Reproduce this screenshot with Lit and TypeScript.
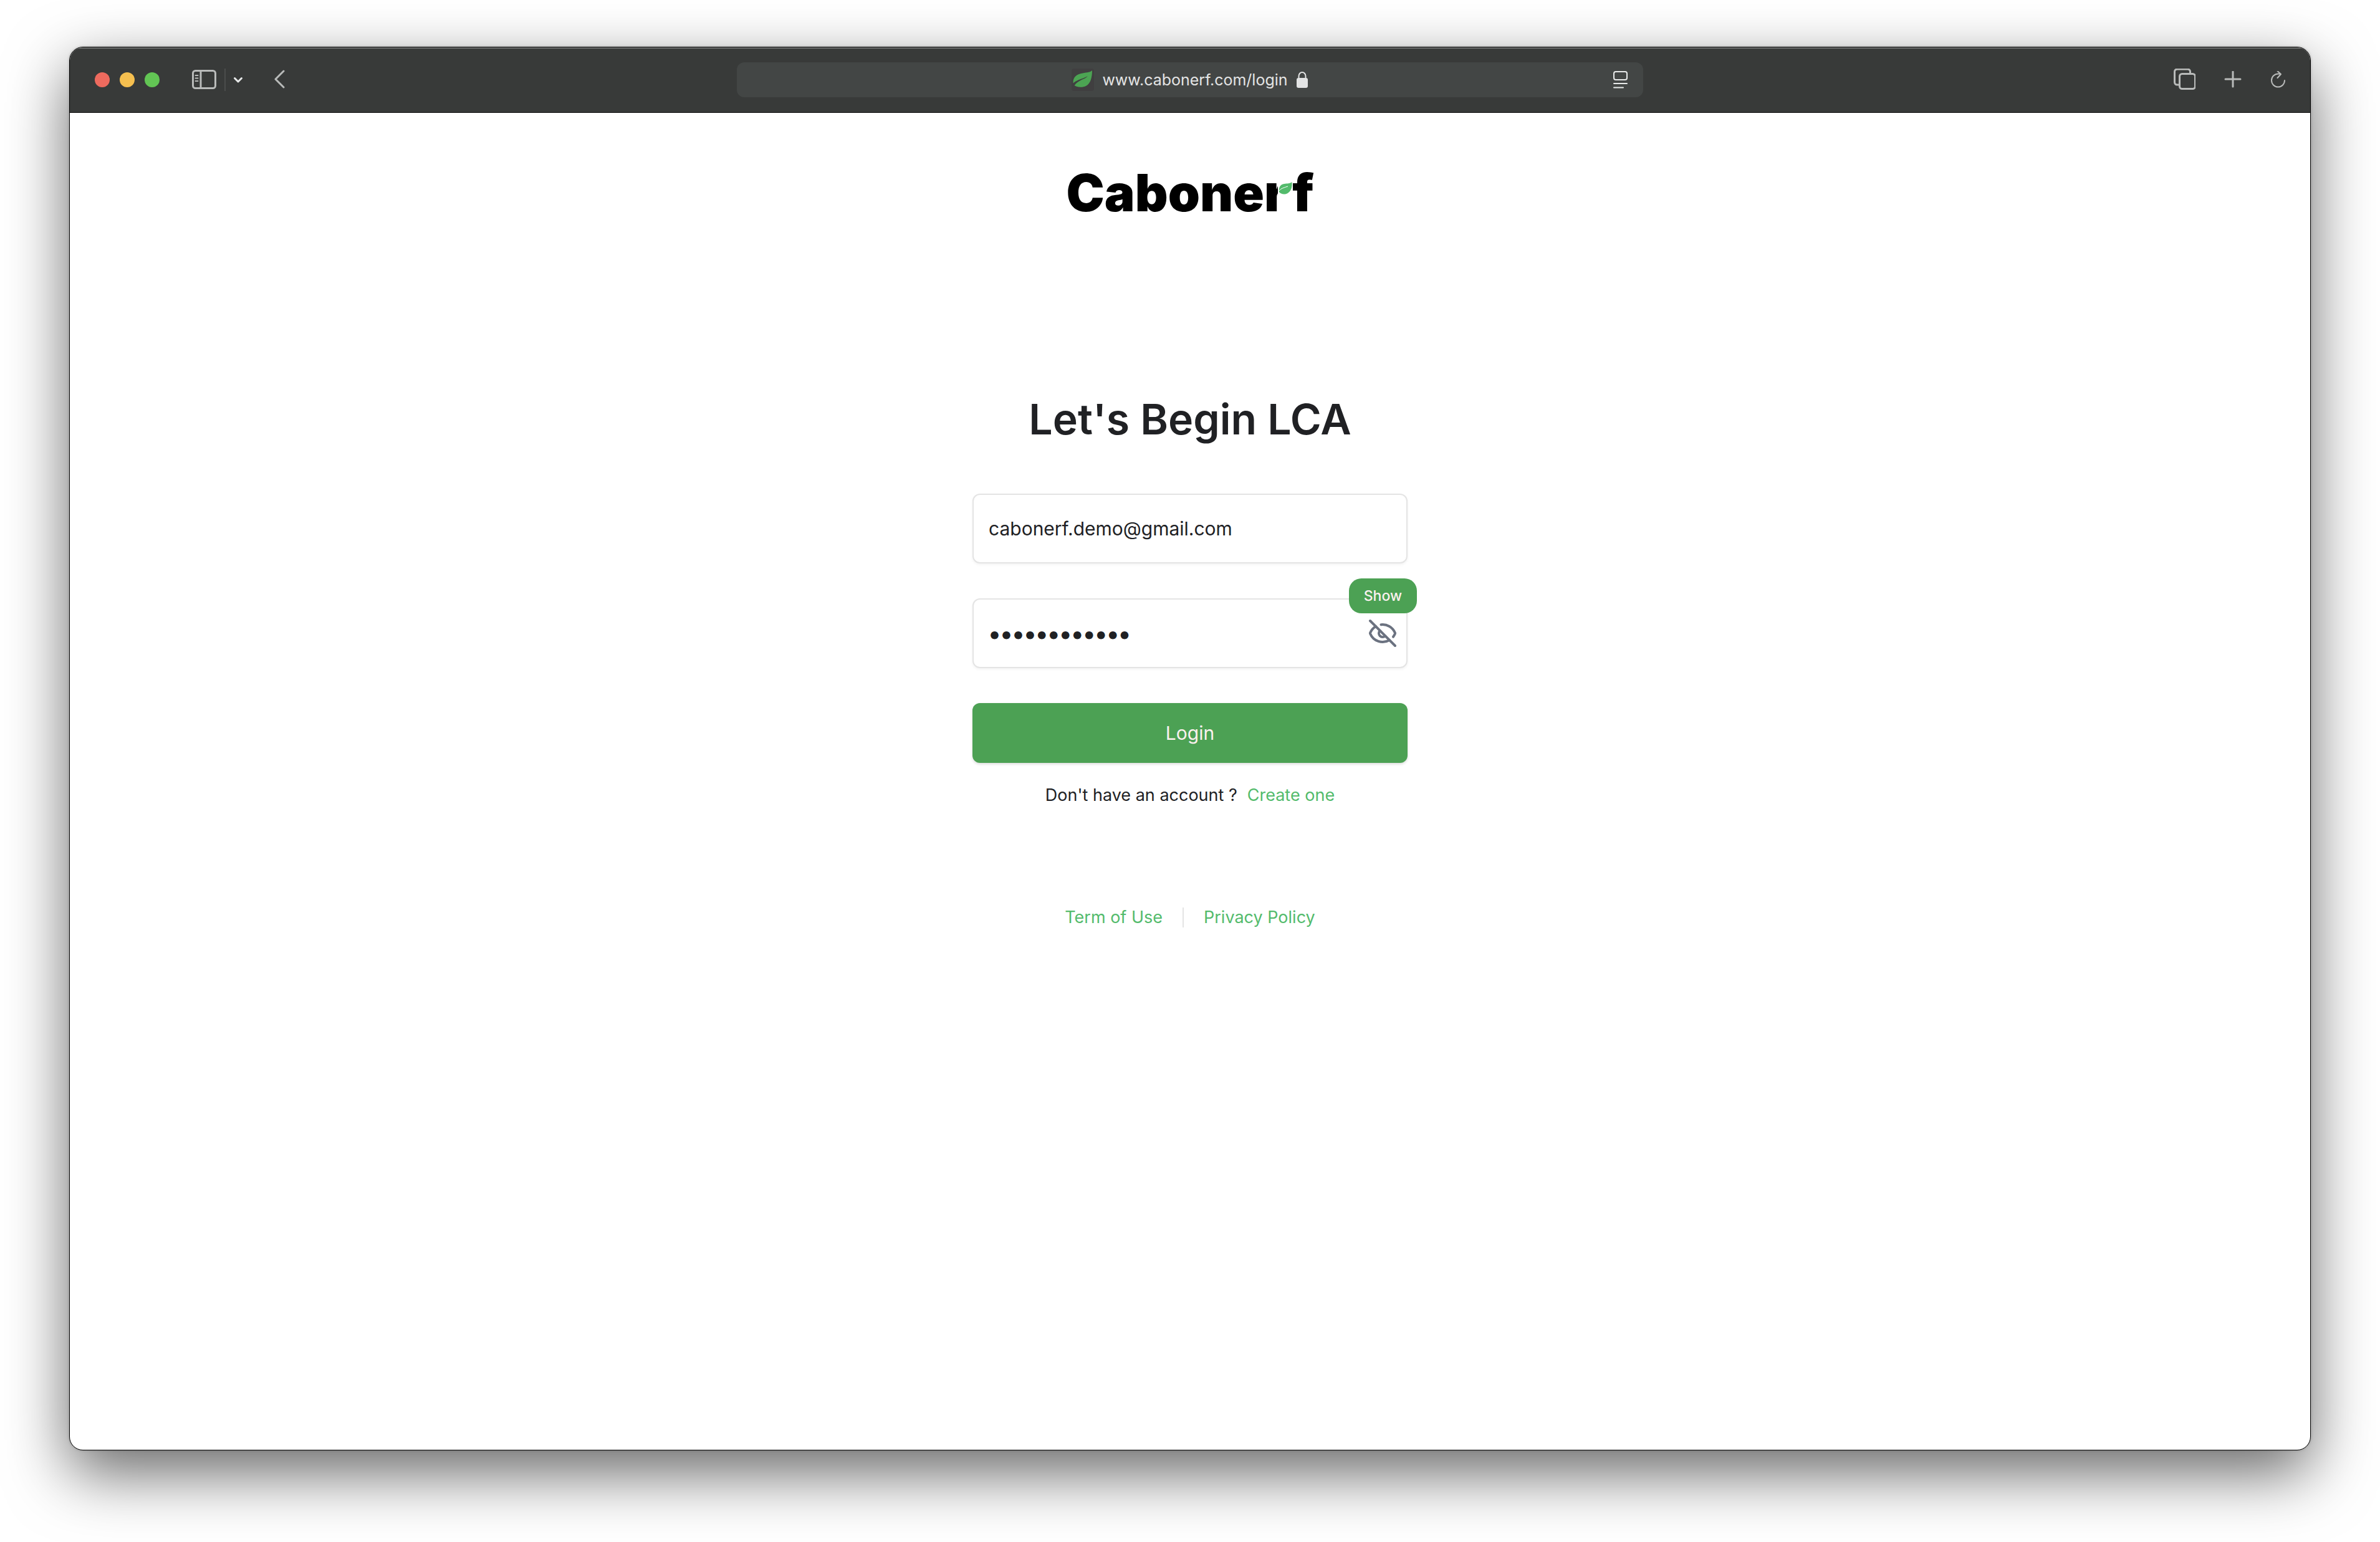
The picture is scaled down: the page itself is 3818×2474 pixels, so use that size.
import { LitElement, html, css } from "lit";
import { customElement } from "lit/decorators.js";

@customElement("browser-toolbar")
class BrowserToolbar extends LitElement {
  static styles = css`
    :host {
      display: grid;
      grid-template-columns: minmax(0, 1fr) minmax(0, 1454px) minmax(0, 1fr);
      align-items: center;
      box-sizing: border-box;
      height: 105px;
      padding: 0 36px;
      background: #383a39;
      box-shadow: inset 0 2px 0 #6f7170;
      border-bottom: 1px solid #000;
      font-family: Inter, sans-serif;
    }
    .side {
      display: flex;
      align-items: center;
    }
    .side.end {
      justify-content: flex-end;
      gap: 46px;
    }
    .lights {
      display: flex;
      gap: 16px;
      margin: 0 52px 0 4px;
    }
    .light {
      width: 24px;
      height: 24px;
      padding: 0;
      border: 0;
      border-radius: 50%;
    }
    .close { background: #ed6a5e; }
    .minimize { background: #f5bf4f; }
    .maximize { background: #62c554; }
    .tool {
      display: flex;
      padding: 0;
      border: 0;
      background: none;
      color: #b9bbba;
    }
    .bright { color: #e8eaea; }
    .rule {
      width: 2px;
      height: 36px;
      margin: 0 12px;
      background: #4b4d4c;
    }
    .back { margin-left: 48px; }
    .address {
      display: grid;
      grid-template-columns: 48px 1fr 48px;
      align-items: center;
      height: 56px;
      border-radius: 12px;
      background: #434645;
    }
    .location {
      grid-column: 2;
      display: flex;
      align-items: center;
      justify-content: center;
      gap: 13px;
      color: #e3e4e4;
      font-size: 25px;
      line-height: 32px;
    }
    .favicon {
      display: flex;
      border-radius: 4px;
      background: #403f40;
    }
    svg { display: block; fill: none; stroke: currentColor; }
  `;

  render() {
    return html`
      <div class="side">
        <div class="lights">
          <button class="light close" aria-label="Close"></button>
          <button class="light minimize" aria-label="Minimize"></button>
          <button class="light maximize" aria-label="Full screen"></button>
        </div>
        <button class="tool" aria-label="Sidebar">
          <svg width="40" height="32" viewBox="0 0 40 32" stroke-width="3">
            <rect x="1.500" y="1.500" width="36" height="28" rx="4" />
            <path d="M14 1.500v28" />
            <path d="M5.500 9h4M5.500 13.500h4M5.500 18h4" stroke-width="2" stroke-linecap="round" />
          </svg>
        </button>
        <span class="rule"></span>
        <button class="tool bright" aria-label="Tab groups">
          <svg width="16" height="12" viewBox="0 0 16 12" stroke-width="3" stroke-linecap="round" stroke-linejoin="round">
            <path d="M2.500 3.500 8 9l5.500-5.500" />
          </svg>
        </button>
        <button class="tool back" aria-label="Back">
          <svg width="20" height="32" viewBox="0 0 20 32" stroke-width="3" stroke-linecap="round" stroke-linejoin="round">
            <path d="M17 2 4 15l13 13" />
          </svg>
        </button>
      </div>
      <div class="address">
        <div class="location">
          <span class="favicon">
            <svg width="36" height="36" viewBox="0 0 36 36" stroke="none">
              <path fill="#4ca453" stroke="none" d="M33 3C29 7 22 6 15 8 6 10 1 16 3 26c4 4 14 5 20 2C31 24 33 13 33 3Z" />
              <path fill="#403f40" stroke="none" d="M1 25C7 18 17 17 26 12 21 18 10 18 4 28Z" />
            </svg>
          </span>
          <span>www.cabonerf.com/login</span>
          <svg width="20" height="28" viewBox="0 0 20 28" stroke-width="2">
            <rect x="1" y="11" width="18" height="16" rx="3" fill="currentColor" stroke="none" />
            <path d="M4.500 12V8a5.500 6 0 0 1 11 0v4" />
          </svg>
        </div>
        <button class="tool bright" aria-label="Reader">
          <svg width="24" height="28" viewBox="0 0 24 28" stroke-width="2" stroke-linecap="round">
            <rect x="1" y="1" width="21" height="13" rx="3" />
            <path d="M1 20h21M1 26.500h15" />
          </svg>
        </button>
      </div>
      <div class="side end">
        <button class="tool" aria-label="Tab overview">
          <svg width="36" height="36" viewBox="0 0 36 36" stroke-width="3">
            <path d="M9 26H6.500a4 4 0 0 1-4-4V5a4 4 0 0 1 4-4h17a4 4 0 0 1 4 4v3" />
            <rect x="10.500" y="8.500" width="25" height="24" rx="4" />
          </svg>
        </button>
        <button class="tool" aria-label="New tab">
          <svg width="28" height="28" viewBox="0 0 28 28" stroke-width="3" stroke-linecap="round">
            <path d="M14 1v24M2 13h24" />
          </svg>
        </button>
        <button class="tool" aria-label="Reload">
          <svg width="28" height="28" viewBox="0 0 28 28" stroke-width="2" stroke-linecap="round" stroke-linejoin="round">
            <path d="M23 15a10.500 10.500 0 1 1-10.500-10.500h4M11.500 0l5.500 5-5.500 6" />
          </svg>
        </button>
      </div>
    `;
  }
}

@customElement("brand-logo")
class BrandLogo extends LitElement {
  static styles = css`
    :host { display: block; }
    .wordmark {
      display: flex;
      color: #000;
      font: 900 82px/96px Inter, sans-serif;
    }
    .sprout {
      position: relative;
      width: 45px;
    }
    .leaf {
      position: absolute;
      left: 22px;
      top: 28px;
      display: block;
    }
  `;

  render() {
    return html`
      <div class="wordmark">
        <span>Cabone</span>
        <span class="sprout">r<svg class="leaf" width="24" height="32" viewBox="0 0 24 32">
            <path fill="#fff" d="M0 0h24v32H0Z" />
            <path fill="#53bb6c" d="M22.500 2C23 9 22 15 17 19 12 23 5 22 2 18 1 10 4 6 10 5c5-1 9 0 12.500-3Z" />
            <path fill="none" stroke="#fff" stroke-width="1" d="M2 16c3-4 8-5 14-7" />
          </svg></span>
        <span>f</span>
      </div>
    `;
  }
}

@customElement("login-form")
class LoginForm extends LitElement {
  static styles = css`
    :host {
      display: block;
      width: 698px;
      max-width: 100%;
      font-family: Inter, sans-serif;
      color: #202124;
    }
    .form {
      display: flex;
      flex-direction: column;
      gap: 56px;
    }
    .title {
      margin: 0 0 24px;
      text-align: center;
      font-size: 68px;
      line-height: 80px;
      font-weight: 600;
    }
    .field { position: relative; }
    .input {
      display: block;
      box-sizing: border-box;
      width: 100%;
      height: 112px;
      padding: 0 24px;
      border: 2px solid #e4e4e4;
      border-radius: 12px;
      background: #fff;
      box-shadow: 0 2px 4px rgba(0, 0, 0, 0.05);
      color: inherit;
      font: 400 30px/40px Inter, sans-serif;
      outline: none;
    }
    .secret {
      font-size: 40px;
      font-weight: 700;
    }
    .reveal {
      position: absolute;
      top: 32px;
      right: 16px;
      padding: 0;
      border: 0;
      background: none;
      color: #6b7280;
    }
    .tooltip {
      position: absolute;
      top: -32px;
      right: -15px;
      padding: 12px 24px;
      border-radius: 20px;
      background: #4ca154;
      color: #fbf1ee;
      font-size: 23px;
      line-height: 32px;
      font-weight: 500;
    }
    .submit {
      height: 96px;
      border: 0;
      border-radius: 12px;
      background: #4ca154;
      box-shadow: 0 2px 4px rgba(0, 0, 0, 0.14);
      color: #fbf1ee;
      font: 400 30px/40px Inter, sans-serif;
    }
    svg { display: block; }
  `;

  render() {
    return html`
      <form class="form" @submit=${(e: Event) => e.preventDefault()}>
        <h1 class="title">Let's Begin LCA</h1>
        <div class="field">
          <input class="input" type="email" aria-label="Email" value="cabonerf.demo@gmail.com" />
        </div>
        <div class="field">
          <input class="input secret" type="password" aria-label="Password" value="cabonerfdemo" />
          <button class="reveal" type="button" aria-label="Show password">
            <svg width="48" height="48" viewBox="0 0 24 24" fill="none" stroke="currentColor" stroke-width="2" stroke-linecap="round" stroke-linejoin="round">
              <path d="M10.733 5.076a10.744 10.744 0 0 1 11.205 6.575 1 1 0 0 1 0 .696 10.747 10.747 0 0 1-1.444 2.490" />
              <path d="M14.084 14.158a3 3 0 0 1-4.242-4.242" />
              <path d="M17.479 17.499a10.750 10.750 0 0 1-15.417-5.151 1 1 0 0 1 0-.696 10.750 10.750 0 0 1 4.446-5.143" />
              <path d="m2 2 20 20" />
            </svg>
          </button>
          <span class="tooltip" role="tooltip">Show</span>
        </div>
        <button class="submit" type="submit">Login</button>
      </form>
    `;
  }
}

@customElement("app-root")
class AppRoot extends LitElement {
  static styles = css`
    :host {
      display: flex;
      box-sizing: border-box;
      min-height: 100vh;
      padding: 75px 111px 147px;
      background: #fff;
      font-family: Inter, sans-serif;
    }
    .window {
      flex: 1;
      min-width: 0;
      overflow: hidden;
      border: 1px solid #000;
      border-radius: 22px;
      background: #fff;
      box-shadow: 0 36px 100px rgba(0, 0, 0, 0.6), 0 0 4px rgba(0, 0, 0, 0.2);
    }
    .page {
      display: flex;
      flex-direction: column;
      align-items: center;
      padding-top: 81px;
      color: #202124;
      font-size: 27px;
      line-height: 40px;
    }
    .login { margin-top: 274px; }
    .signup {
      display: flex;
      gap: 16px;
      margin: 32px 0 0;
    }
    .link {
      color: #53bb6c;
      text-decoration: none;
    }
    .legal {
      display: flex;
      align-items: center;
      gap: 32px;
      margin-top: 156px;
    }
    .divider {
      width: 2px;
      height: 32px;
      background: #e4e4e4;
    }
  `;

  render() {
    return html`
      <div class="window">
        <browser-toolbar></browser-toolbar>
        <main class="page">
          <brand-logo></brand-logo>
          <login-form class="login"></login-form>
          <p class="signup">
            <span>Don't have an account ?</span>
            <a class="link" href="#signup">Create one</a>
          </p>
          <nav class="legal">
            <a class="link" href="#terms">Term of Use</a>
            <span class="divider"></span>
            <a class="link" href="#privacy">Privacy Policy</a>
          </nav>
        </main>
      </div>
    `;
  }
}
